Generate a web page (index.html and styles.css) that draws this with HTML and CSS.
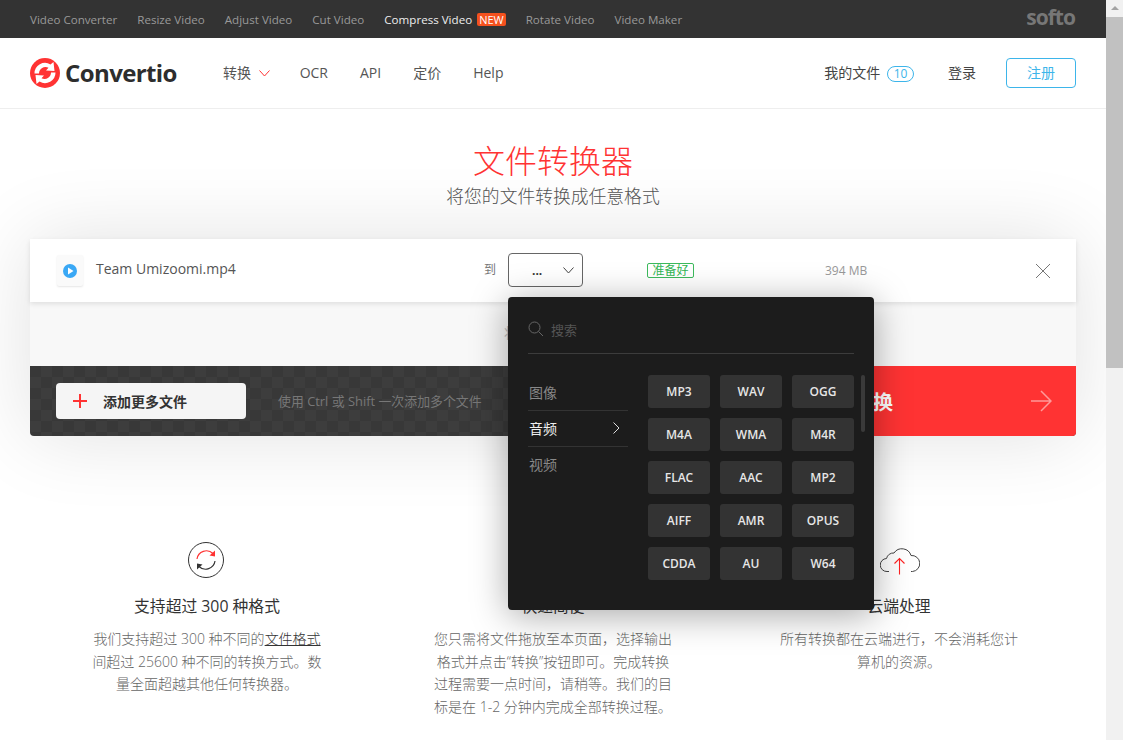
FILE: index.html
```html
<!DOCTYPE html>
<html lang="zh-CN">

<head>
    <meta charset="UTF-8">
    <title>Convertio - 文件转换器</title>
    <link rel="stylesheet" href="styles.css">
</head>

<body>
    <div class="page">
        <div class="topbar">
            <a>Video Converter</a>
            <a>Resize Video</a>
            <a>Adjust Video</a>
            <a>Cut Video</a>
            <a class="active">Compress Video <span class="new">NEW</span></a>
            <a>Rotate Video</a>
            <a>Video Maker</a>
            <span class="softo">softo</span>
        </div>

        <header class="header">
            <div class="logo">
                <svg width="30" height="30" viewBox="0 0 30 30">
                    <circle cx="15" cy="15" r="15" fill="#ff3333" />
                    <path d="M4.500 15.500 A10.500 10.500 0 0 1 20.500 6.500 L23.500 4 L24.500 13 L16 12.500 L18.500 9.800 A6.500 6.500 0 0 0 9 15.500 Z" fill="#fff" />
                    <path d="M25.500 14.500 A10.500 10.500 0 0 1 9.500 23.500 L6.500 26 L5.500 17 L14 17.500 L11.500 20.200 A6.500 6.500 0 0 0 21 14.500 Z" fill="#fff" />
                </svg>
                <span>Convertio</span>
            </div>
            <nav class="nav">
                <a class="nav-convert">转换
                    <svg width="11" height="7" viewBox="0 0 11 7"><path d="M.5.500 5.500 6 10.500.500" fill="none" stroke="#ff3333" /></svg>
                </a>
                <a>OCR</a>
                <a>API</a>
                <a>定价</a>
                <a>Help</a>
            </nav>
            <div class="account">
                <a class="myfiles">我的文件 <span class="count">10</span></a>
                <a class="login">登录</a>
                <a class="signup">注册</a>
            </div>
        </header>

        <main class="main">
            <div class="hero">
                <h1>文件转换器</h1>
                <p>将您的文件转换成任意格式</p>
            </div>

            <section class="converter">
                <div class="file-row">
                    <div class="file-icon">
                        <svg width="16" height="16" viewBox="0 0 16 16">
                            <circle cx="8" cy="8" r="7" fill="#3aa8f5" />
                            <path d="M6 4.500 11.500 8 6 11.500Z" fill="#fff" />
                        </svg>
                    </div>
                    <span class="file-name">Team Umizoomi.mp4</span>
                    <span class="to">到</span>
                    <div class="select">
                        <span>...</span>
                        <svg width="11" height="7" viewBox="0 0 11 7"><path d="M.5.500 5.500 6 10.500.500" fill="none" stroke="#444" /></svg>
                    </div>
                    <span class="ready">准备好</span>
                    <span class="size">394 MB</span>
                    <svg class="remove" width="16" height="16" viewBox="0 0 16 16"><path d="M1 1 15 15M15 1 1 15" fill="none" stroke="#777" /></svg>
                </div>

                <div class="drop-row">将文件拖放至此</div>

                <div class="action-bar">
                    <a class="add-btn">
                        <svg width="14" height="14" viewBox="0 0 14 14"><path d="M7 0V14M0 7H14" stroke="#ff3333" stroke-width="2" /></svg>
                        添加更多文件
                    </a>
                    <span class="hint">使用 Ctrl 或 Shift 一次添加多个文件</span>
                    <a class="convert-btn">
                        <span>转换</span>
                        <svg width="22" height="22" viewBox="0 0 22 22"><path d="M1 11H21M11 1 21 11 11 21" fill="none" stroke="#ff9999" stroke-width="1.500" /></svg>
                    </a>
                </div>

                <!-- 格式下拉菜单 -->
                <div class="dropdown">
                    <div class="search">
                        <svg width="16" height="16" viewBox="0 0 16 16">
                            <circle cx="6.500" cy="6.500" r="5.500" fill="none" stroke="#666" />
                            <path d="M10.500 10.500 15 15" stroke="#666" />
                        </svg>
                        <span>搜索</span>
                    </div>
                    <div class="dropdown-body">
                        <ul class="categories">
                            <li>图像</li>
                            <li class="current">音频
                                <svg width="7" height="12" viewBox="0 0 7 12"><path d="M.5.500 6 6 .5 11.500" fill="none" stroke="#ddd" /></svg>
                            </li>
                            <li>视频</li>
                        </ul>
                        <div class="formats">
                            <a>MP3</a><a>WAV</a><a>OGG</a>
                            <a>M4A</a><a>WMA</a><a>M4R</a>
                            <a>FLAC</a><a>AAC</a><a>MP2</a>
                            <a>AIFF</a><a>AMR</a><a>OPUS</a>
                            <a>CDDA</a><a>AU</a><a>W64</a>
                        </div>
                        <div class="thumb"></div>
                    </div>
                </div>
            </section>

            <section class="features">
                <div class="feature">
                    <svg class="feature-icon" width="36" height="36" viewBox="0 0 36 36">
                        <circle cx="18" cy="18" r="17.500" fill="none" stroke="#333" />
                        <path d="M9 17A9.500 9.500 0 0 1 25 11.500" fill="none" stroke="#ff3333" stroke-width="1.200" />
                        <path d="M27 8.500 27 14.500 21.500 13.500Z" fill="#ff3333" />
                        <path d="M27 19A9.500 9.500 0 0 1 11 24.500" fill="none" stroke="#333" stroke-width="1.200" />
                        <path d="M9 27.500 9 21.500 14.500 22.500Z" fill="#333" />
                    </svg>
                    <h3>支持超过 300 种格式</h3>
                    <p>我们支持超过 300 种不同的<u>文件格式</u>间超过 25600 种不同的转换方式。数量全面超越其他任何转换器。</p>
                </div>
                <div class="feature">
                    <svg class="feature-icon" width="36" height="36" viewBox="0 0 36 36"></svg>
                    <h3>快速简便</h3>
                    <p>您只需将文件拖放至本页面，选择输出格式并点击“转换”按钮即可。完成转换过程需要一点时间，请稍等。我们的目标是在 1-2 分钟内完成全部转换过程。</p>
                </div>
                <div class="feature">
                    <svg class="feature-icon" width="40" height="36" viewBox="0 0 40 36">
                        <path d="M9 29.500H7A6.500 6.500 0 0 1 6.500 16.500A7 7 0 0 1 14 11A9.500 9.500 0 0 1 31 13.500A8 8 0 0 1 32.500 29.500H31" fill="none" stroke="#444" />
                        <path d="M19.500 32.500V16.500M14.500 21.500 19.500 16.500 24.500 21.500" fill="none" stroke="#ff2222" stroke-width="1.100" />
                    </svg>
                    <h3>云端处理</h3>
                    <p>所有转换都在云端进行，不会消耗您计算机的资源。</p>
                </div>
            </section>
        </main>
    </div>

    <div class="scrollbar">
        <div class="scroll-up"></div>
        <div class="scroll-thumb"></div>
    </div>
</body>

</html>
```

FILE: styles.css
```css
* {
    margin: 0;
    padding: 0;
    box-sizing: border-box;
}

html,
body {
    height: 100%;
    overflow: hidden;
}

body {
    display: flex;
    background-color: #fff;
    font-family: "Open Sans", "Noto Sans CJK SC", sans-serif;
    font-size: 14px;
    color: #555;
}

.page {
    flex: 1;
    min-width: 0;
    overflow: hidden;
}

.scrollbar {
    width: 17px;
    background-color: #f1f1f1;
    display: flex;
    flex-direction: column;
}

.scroll-up {
    height: 17px;
    position: relative;
}

.scroll-up::after {
    content: "";
    position: absolute;
    left: 5px;
    top: 6px;
    border-left: 4px solid transparent;
    border-right: 4px solid transparent;
    border-bottom: 4px solid #a3a3a3;
}

.scroll-thumb {
    height: 351px;
    background-color: #c1c1c1;
}

.topbar {
    height: 38px;
    background-color: #333;
    display: flex;
    align-items: center;
    gap: 20px;
    padding: 0 30px;
    font-size: 11.6px;
    color: #999;
}

.topbar .active {
    color: #eee;
}

.new {
    display: inline-block;
    background-color: #f4511e;
    color: #fff;
    font-size: 11px;
    line-height: 13px;
    padding: 0 2px;
    border-radius: 2px;
    margin-left: 2px;
}

.softo {
    margin-left: auto;
    margin-right: 1px;
    margin-top: -4px;
    font-size: 21px;
    font-weight: 700;
    color: #777;
    letter-spacing: -1px;
}

.header {
    height: 71px;
    border-bottom: 1px solid #eee;
    display: flex;
    align-items: center;
    padding: 0 30px;
}

.logo {
    display: flex;
    align-items: center;
    gap: 5px;
    width: 193px;
    font-size: 24px;
    font-weight: 700;
    color: #2d2d2d;
    letter-spacing: -.6px;
}

.logo span {
    margin-top: -2px;
}

.nav {
    display: flex;
    align-items: center;
    gap: 32px;
    flex: 1;
    margin-top: -2px;
}

.nav-convert {
    margin-right: -2px;
}

.nav-convert svg {
    margin-left: 4px;
    vertical-align: 1px;
}

.account {
    display: flex;
    align-items: center;
}

.myfiles {
    color: #444;
    font-size: 14px;
    margin-top: -2px;
}

.count {
    display: inline-block;
    width: 27px;
    height: 16px;
    line-height: 14px;
    border: 1px solid #3db5ea;
    border-radius: 8px;
    color: #3db5ea;
    font-size: 12px;
    text-align: center;
    margin-left: 3px;
}

.login {
    color: #444;
    margin-left: 34px;
    margin-top: -2px;
}

.signup {
    width: 70px;
    height: 30px;
    line-height: 28px;
    margin-left: 30px;
    border: 1px solid #3db5ea;
    border-radius: 4px;
    color: #3db5ea;
    text-align: center;
}

.main {
    height: 631px;
    overflow: hidden;
}

.hero {
    text-align: center;
    padding-top: 30px;
    height: 130px;
}

.hero h1 {
    font-size: 32px;
    line-height: 44px;
    font-weight: 300;
    color: #ff3333;
}

.hero p {
    font-size: 17.800px;
    line-height: 26px;
    font-weight: 300;
    color: #555;
}

.converter {
    position: relative;
    margin: 0 30px;
    background-color: #f8f8f8;
    border-radius: 4px;
    box-shadow: 0 0 80px rgba(0, 0, 0, .12);
}

.file-row {
    height: 63px;
    background-color: #fff;
    display: flex;
    align-items: center;
    padding-left: 27px;
    box-shadow: 0 2px 5px rgba(0, 0, 0, .1);
    position: relative;
}

.file-icon {
    width: 26px;
    height: 31px;
    background-color: #fafafa;
    box-shadow: 0 1px 2px rgba(0, 0, 0, .1);
    border-radius: 2px;
    display: flex;
    align-items: center;
    justify-content: center;
    margin-right: 13px;
}

.file-name {
    width: 388px;
    color: #555;
    margin-top: -5px;
}

.to {
    width: 24px;
    font-size: 12px;
    color: #777;
    margin-top: -3px;
}

.select {
    width: 75px;
    height: 34px;
    border: 1px solid #666;
    border-radius: 4px;
    display: flex;
    align-items: center;
    padding: 0 8px 0 23px;
    justify-content: space-between;
    color: #333;
    font-size: 12px;
    font-weight: 700;
    margin-top: -1px;
}

.ready {
    margin-left: 64px;
    border: 1px solid #3cba5c;
    border-radius: 2px;
    color: #2fb552;
    font-size: 12px;
    line-height: 13px;
    padding: 0 2px;
    width: 47px;
    text-align: center;
}

.size {
    margin-left: 131px;
    font-size: 12px;
    color: #999;
    width: 211px;
}

.remove {
    margin-left: -1px;
}

.drop-row {
    height: 64px;
    line-height: 62px;
    text-align: center;
    font-size: 14px;
    color: #bbb;
}

.action-bar {
    height: 70px;
    display: flex;
    align-items: center;
    padding-left: 26px;
    border-radius: 0 0 4px 4px;
    overflow: hidden;
    background-color: #3a3a3a;
    background-image: repeating-conic-gradient(#3d3d3d 0 25%, #383838 0 50%);
    background-size: 22px 22px;
}

.add-btn {
    width: 190px;
    height: 36px;
    background-color: #f5f5f5;
    border-radius: 4px;
    display: flex;
    align-items: center;
    gap: 16px;
    padding-left: 17px;
    font-weight: 700;
    font-size: 14px;
    color: #333;
}

.hint {
    margin-left: 32px;
    margin-top: -2px;
    font-size: 12.900px;
    color: #777;
}

.convert-btn {
    margin-left: auto;
    width: 300px;
    height: 70px;
    background: linear-gradient(to right, #3a3a3a, #ff3333 25%);
    display: flex;
    align-items: center;
    justify-content: space-between;
    padding: 0 24px 0 77px;
    color: #fff;
    font-size: 20px;
    font-weight: 700;
}

.dropdown {
    position: absolute;
    left: 478px;
    top: 58px;
    width: 366px;
    height: 313px;
    background-color: #1c1c1c;
    border-radius: 4px;
    padding: 0 20px;
    box-shadow: 0 5px 36px rgba(0, 0, 0, .35);
    z-index: 5;
}

.search {
    height: 57px;
    border-bottom: 1px solid #3c3c3c;
    display: flex;
    align-items: center;
    gap: 7px;
    padding-top: 8px;
    color: #555;
    font-size: 13px;
}

.dropdown-body {
    position: relative;
    display: flex;
    gap: 20px;
    padding-top: 21px;
}

.categories {
    list-style: none;
    width: 100px;
    color: #888;
}

.categories li {
    height: 36px;
    border-bottom: 1px solid #333;
    padding: 0 8px 2px 1px;
    display: flex;
    align-items: center;
    justify-content: space-between;
}

.categories li:last-child {
    border-bottom-color: transparent;
}

.categories .current {
    color: #eee;
}

.formats {
    display: grid;
    grid-template-columns: repeat(3, 62px);
    grid-auto-rows: 33px;
    gap: 10px;
}

.formats a {
    background-color: #333;
    border-radius: 3px;
    color: #e6e6e6;
    font-size: 12px;
    font-weight: 600;
    line-height: 33px;
    text-align: center;
}

.thumb {
    position: absolute;
    right: -11px;
    top: 21px;
    width: 4px;
    height: 57px;
    background-color: #3a3a3a;
    border-radius: 2px;
}

.features {
    display: flex;
    justify-content: space-between;
    padding: 106px 87px 0;
}

.feature {
    width: 240px;
    text-align: center;
}

.feature-icon {
    display: block;
    margin-left: calc(50% - 19px);
    margin-bottom: 16px;
}

.feature h3 {
    font-size: 15.800px;
    line-height: 24px;
    font-weight: 400;
    color: #333;
    margin-bottom: 10px;
}

.feature p {
    font-size: 14px;
    line-height: 22.500px;
    font-weight: 300;
    color: #666;
}

.feature u {
    color: #333;
}
```
